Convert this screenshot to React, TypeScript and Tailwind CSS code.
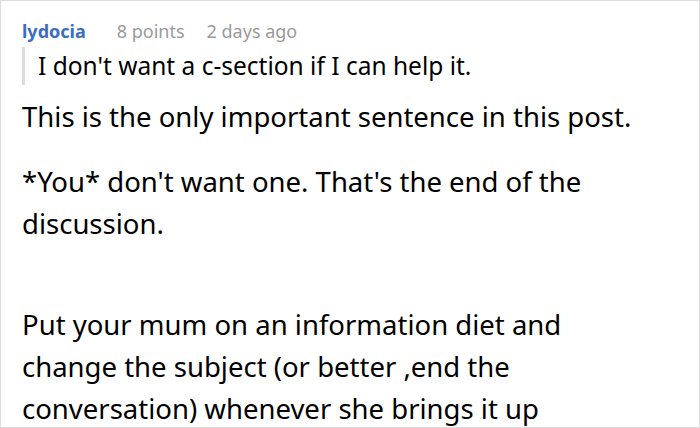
import React from 'react'

const font = { fontFamily: '"Noto Sans", "Open Sans", sans-serif' }

export default function App() {
  return (
    <div
      className="w-[700px] h-[428px] overflow-hidden bg-white border border-[#dcdcdc] text-black"
      style={font}
    >
      <div className="pl-[21px] pr-2 pt-[17px]">
        <div className="flex items-baseline text-[18px] leading-[26px]">
          <span className="font-bold text-[#3b6ec0]">lydocia</span>
          <span className="ml-[31px] text-[#9a9a9a]">8 points</span>
          <span className="ml-[22px] text-[#9a9a9a]">2 days ago</span>
        </div>
        <blockquote className="mt-[3px] border-l-[3px] border-[#dddddd] pl-[13px] py-[4px] text-[24.5px] leading-[30px] whitespace-nowrap">
          I don't want a c-section if I can help it.
        </blockquote>
        <div className="mt-[11px] text-[27.5px] leading-[42px] whitespace-nowrap">
          <p>This is the only important sentence in this post.</p>
          <p className="mt-[23px]">
            *You* don't want one. That's the end of the
            <br />
            discussion.
          </p>
          <p className="mt-[59px]">
            Put your mum on an information diet and
            <br />
            change the subject (or better ,end the
            <br />
            conversation) whenever she brings it up
          </p>
        </div>
      </div>
    </div>
  )
}
